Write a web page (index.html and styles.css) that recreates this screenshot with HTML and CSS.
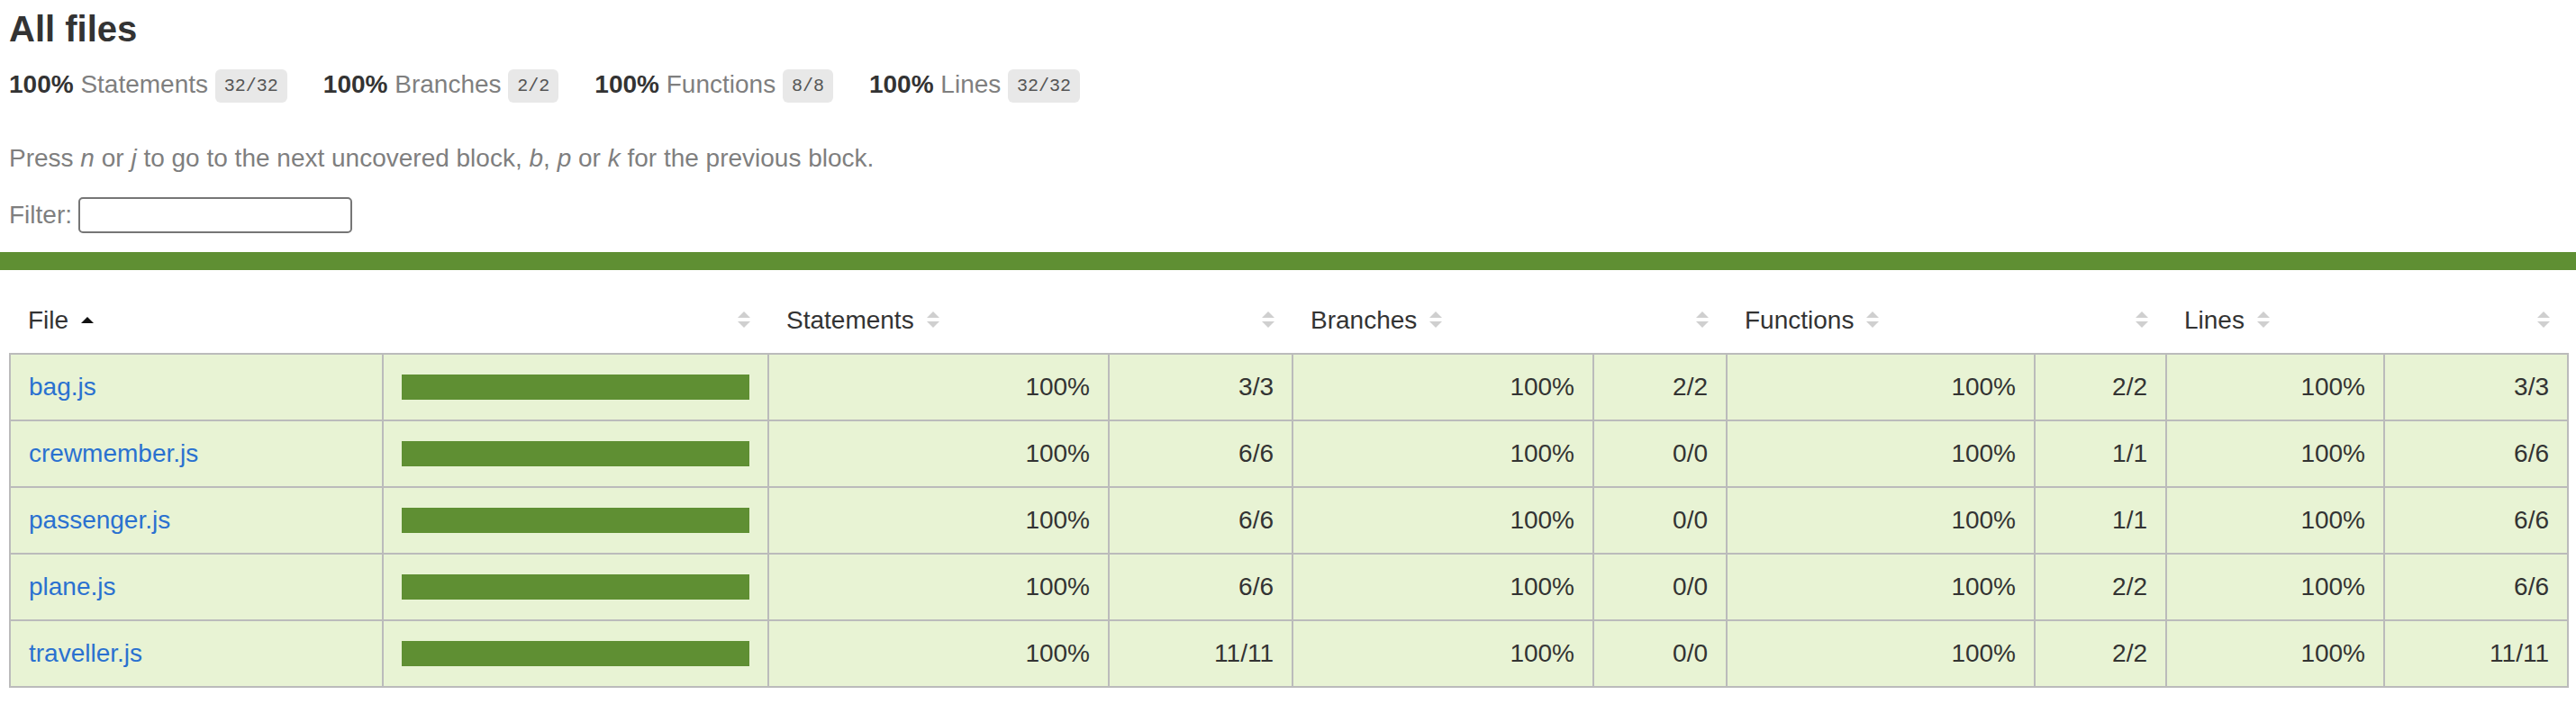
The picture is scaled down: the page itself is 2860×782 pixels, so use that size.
FILE: index.html
```html
<!doctype html>
<html lang="en">
<head>
<meta charset="utf-8">
<title>Code coverage report for All files</title>
<link rel="stylesheet" href="styles.css">
</head>
<body>
<div class="top">
  <h1>All files</h1>
  <div class="stats">
    <div class="stat"><span class="strong">100%</span> <span class="quiet">Statements</span> <span class="fraction">32/32</span></div>
    <div class="stat"><span class="strong">100%</span> <span class="quiet">Branches</span> <span class="fraction">2/2</span></div>
    <div class="stat"><span class="strong">100%</span> <span class="quiet">Functions</span> <span class="fraction">8/8</span></div>
    <div class="stat"><span class="strong">100%</span> <span class="quiet">Lines</span> <span class="fraction">32/32</span></div>
  </div>
  <p class="quiet hint">Press <em>n</em> or <em>j</em> to go to the next uncovered block, <em>b</em>, <em>p</em> or <em>k</em> for the previous block.</p>
  <div class="quiet filter"><label for="fileSearch">Filter:</label><input type="search" id="fileSearch"></div>
</div>
<div class="status-line high"></div>
<div class="table-wrap">
<table class="coverage-summary">
  <colgroup>
    <col class="w-file"><col class="w-pic">
    <col class="w-spct"><col class="w-sabs">
    <col class="w-bpct"><col class="w-babs">
    <col class="w-fpct"><col class="w-fabs">
    <col class="w-lpct"><col class="w-labs">
  </colgroup>
  <thead>
    <tr>
      <th class="file sorted">File<svg class="sorter" viewBox="0 0 14 20"><polygon points="0,14 7,7 14,14" fill="#111"/></svg></th>
      <th class="pic"><svg class="sorter" viewBox="0 0 14 20"><polygon points="0,8 7,1 14,8" fill="#cfcfcf"/><polygon points="0,12 14,12 7,19" fill="#cfcfcf"/></svg></th>
      <th class="pct">Statements<svg class="sorter" viewBox="0 0 14 20"><polygon points="0,8 7,1 14,8" fill="#cfcfcf"/><polygon points="0,12 14,12 7,19" fill="#cfcfcf"/></svg></th>
      <th class="abs"><svg class="sorter" viewBox="0 0 14 20"><polygon points="0,8 7,1 14,8" fill="#cfcfcf"/><polygon points="0,12 14,12 7,19" fill="#cfcfcf"/></svg></th>
      <th class="pct">Branches<svg class="sorter" viewBox="0 0 14 20"><polygon points="0,8 7,1 14,8" fill="#cfcfcf"/><polygon points="0,12 14,12 7,19" fill="#cfcfcf"/></svg></th>
      <th class="abs"><svg class="sorter" viewBox="0 0 14 20"><polygon points="0,8 7,1 14,8" fill="#cfcfcf"/><polygon points="0,12 14,12 7,19" fill="#cfcfcf"/></svg></th>
      <th class="pct">Functions<svg class="sorter" viewBox="0 0 14 20"><polygon points="0,8 7,1 14,8" fill="#cfcfcf"/><polygon points="0,12 14,12 7,19" fill="#cfcfcf"/></svg></th>
      <th class="abs"><svg class="sorter" viewBox="0 0 14 20"><polygon points="0,8 7,1 14,8" fill="#cfcfcf"/><polygon points="0,12 14,12 7,19" fill="#cfcfcf"/></svg></th>
      <th class="pct">Lines<svg class="sorter" viewBox="0 0 14 20"><polygon points="0,8 7,1 14,8" fill="#cfcfcf"/><polygon points="0,12 14,12 7,19" fill="#cfcfcf"/></svg></th>
      <th class="abs"><svg class="sorter" viewBox="0 0 14 20"><polygon points="0,8 7,1 14,8" fill="#cfcfcf"/><polygon points="0,12 14,12 7,19" fill="#cfcfcf"/></svg></th>
    </tr>
  </thead>
  <tbody>
    <tr>
      <td class="file high"><a href="#">bag.js</a></td>
      <td class="pic high"><div class="chart"><div class="cover-fill" style="width: 100%"></div></div></td>
      <td class="pct high">100%</td><td class="abs high">3/3</td>
      <td class="pct high">100%</td><td class="abs high">2/2</td>
      <td class="pct high">100%</td><td class="abs high">2/2</td>
      <td class="pct high">100%</td><td class="abs high">3/3</td>
    </tr>
    <tr>
      <td class="file high"><a href="#">crewmember.js</a></td>
      <td class="pic high"><div class="chart"><div class="cover-fill" style="width: 100%"></div></div></td>
      <td class="pct high">100%</td><td class="abs high">6/6</td>
      <td class="pct high">100%</td><td class="abs high">0/0</td>
      <td class="pct high">100%</td><td class="abs high">1/1</td>
      <td class="pct high">100%</td><td class="abs high">6/6</td>
    </tr>
    <tr>
      <td class="file high"><a href="#">passenger.js</a></td>
      <td class="pic high"><div class="chart"><div class="cover-fill" style="width: 100%"></div></div></td>
      <td class="pct high">100%</td><td class="abs high">6/6</td>
      <td class="pct high">100%</td><td class="abs high">0/0</td>
      <td class="pct high">100%</td><td class="abs high">1/1</td>
      <td class="pct high">100%</td><td class="abs high">6/6</td>
    </tr>
    <tr>
      <td class="file high"><a href="#">plane.js</a></td>
      <td class="pic high"><div class="chart"><div class="cover-fill" style="width: 100%"></div></div></td>
      <td class="pct high">100%</td><td class="abs high">6/6</td>
      <td class="pct high">100%</td><td class="abs high">0/0</td>
      <td class="pct high">100%</td><td class="abs high">2/2</td>
      <td class="pct high">100%</td><td class="abs high">6/6</td>
    </tr>
    <tr>
      <td class="file high"><a href="#">traveller.js</a></td>
      <td class="pic high"><div class="chart"><div class="cover-fill" style="width: 100%"></div></div></td>
      <td class="pct high">100%</td><td class="abs high">11/11</td>
      <td class="pct high">100%</td><td class="abs high">0/0</td>
      <td class="pct high">100%</td><td class="abs high">2/2</td>
      <td class="pct high">100%</td><td class="abs high">11/11</td>
    </tr>
  </tbody>
</table>
</div>
</body>
</html>
```

FILE: styles.css
```css
* { box-sizing: border-box; }

html, body {
  margin: 0;
  padding: 0;
}

body {
  font-family: "Liberation Sans", Arial, Helvetica, sans-serif;
  font-size: 28px;
  line-height: 32px;
  color: #333;
  background: #fff;
}

.top {
  padding: 9px 10px 21px;
}

h1 {
  font-size: 40px;
  line-height: 46px;
  font-weight: bold;
  margin: 0;
}

.stats {
  display: flex;
  padding-top: 22px;
}

.stat {
  margin-right: 40px;
}

.strong { font-weight: bold; }

.quiet { color: #7f7f7f; }

.fraction {
  display: inline-block;
  font-family: "Liberation Mono", "DejaVu Sans Mono", monospace;
  font-size: 20px;
  line-height: 21px;
  color: #555;
  background: #e8e8e8;
  padding: 8px 10px;
  border-radius: 6px;
  vertical-align: middle;
}

.hint {
  margin: 46px 0 0;
}

.filter {
  margin-top: 27px;
  display: flex;
  align-items: center;
  gap: 7px;
}

.filter input {
  width: 304px;
  height: 40px;
  border: 2px solid #767676;
  border-radius: 5px;
  padding: 0 6px;
  background: #fff;
  font: inherit;
}

.status-line {
  height: 20px;
}

.status-line.high { background: #5f8f33; }

.table-wrap {
  padding: 20px 10px 0;
}

.coverage-summary {
  width: 100%;
  border-collapse: collapse;
  table-layout: fixed;
}

.w-file { width: 414px; }
.w-pic { width: 428px; }
.w-spct { width: 378px; }
.w-sabs { width: 204px; }
.w-bpct { width: 334px; }
.w-babs { width: 148px; }
.w-fpct { width: 342px; }
.w-fabs { width: 146px; }
.w-lpct { width: 242px; }
.w-labs { width: 204px; }

.coverage-summary th,
.coverage-summary td {
  padding: 20px;
  font-size: 28px;
  line-height: 32px;
}

.coverage-summary th {
  text-align: left;
  font-weight: normal;
  white-space: nowrap;
  color: #333;
}

.coverage-summary thead tr { border-bottom: 2px solid #bbb; }

.coverage-summary tbody { border: 2px solid #bbb; }

.coverage-summary tbody tr { border-bottom: 2px solid #bbb; }

.coverage-summary td { border-right: 2px solid #bbb; }

.coverage-summary td:last-child { border-right: none; }

.coverage-summary th.pic,
.coverage-summary th.abs,
.coverage-summary td.pct,
.coverage-summary td.abs { text-align: right; }

.coverage-summary td.file { white-space: nowrap; }

.sorter {
  display: inline-block;
  width: 14px;
  height: 20px;
  margin-left: 14px;
  vertical-align: baseline;
}

.high { background: #e8f3d4; }

a {
  color: #2a71d0;
  text-decoration: none;
}

.chart {
  line-height: 0;
  border: 2px solid #5f8f33;
}

.cover-fill {
  height: 24px;
  background: #5f8f33;
}
```
